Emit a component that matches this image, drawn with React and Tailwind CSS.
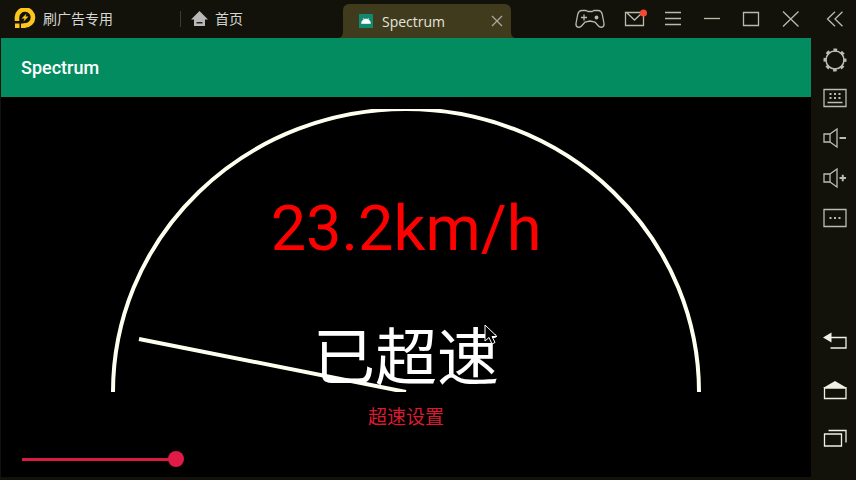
import React, { useState } from "react";

const stroke = { fill: "none", stroke: "currentColor", strokeWidth: 1.3 };

function Icon({ w = 24, h = 24, label, children, className = "" }) {
  return (
    <button type="button" aria-label={label} className={`flex shrink-0 items-center justify-center ${className}`}>
      <svg width={w} height={h} viewBox={`0 0 ${w} ${h}`} {...stroke}>{children}</svg>
    </button>
  );
}

function TitleBar() {
  return (
    <header className="flex h-[38px] shrink-0 items-center text-[#b9b9ac]">
      <div className="flex w-[180px] items-center gap-[7px] pl-[14px] text-[14px] text-[#d6d6d0]">
        <svg width="22" height="22" viewBox="0 0 22 22">
          <path d="M3 13V9a8 8 0 1 1 8 8.500H9.500" fill="none" stroke="#fdc51d" strokeWidth="4.600" />
          <path d="M1 15.500h4.500V20H1zM7 15.500h4.500V20H7z" fill="#fdc51d" />
          <path d="M12.500 5.500L7.500 10.500h3L9.500 13.500l5-5h-3z" fill="#fdc51d" />
        </svg>
        <span>刷广告专用</span>
      </div>
      <div className="flex h-6 flex-1 items-center">
        <span className="h-4 w-px bg-[#3c3c30]" />
        <a href="#home" className="flex items-center gap-[7px] pl-[10px] text-[14px] text-[#d6d6d0]">
          <svg width="17" height="16" viewBox="0 0 17 16" fill="#b9b9b9">
            <path d="M8.500 0L17 8.500h-3V15H3V8.500H0z" />
            <path d="M5.500 11h6v1.500h-6z" fill="#22221c" />
          </svg>
          首页
        </a>
      </div>
      <div className="relative mr-[63px] flex h-[34px] w-[168px] shrink-0 items-center self-end rounded-t-md bg-[#403b1c] pl-4 pr-[8px] text-[#e4e4de]">
        <svg className="absolute bottom-0 -left-1" width="4" height="6" viewBox="0 0 4 6"><path d="M4 0v6H0q4-1 4-6" fill="#403b1c" /></svg>
        <svg className="absolute -right-1 bottom-0" width="4" height="6" viewBox="0 0 4 6"><path d="M0 0v6h4q-4-1-4-6" fill="#403b1c" /></svg>
        <svg width="14" height="14" viewBox="0 0 14 14">
          <path d="M0 0h14v14H0z" fill="#10896f" />
          <path d="M2.500 9.500a4.500 4.500 0 0 1 9 0zM4 4l1.500 2M10 4L8.500 6" fill="#fff" stroke="#fff" strokeWidth=".6" />
        </svg>
        <span className="flex-1 pl-[9px] font-['Open_Sans',sans-serif] text-[14px]">Spectrum</span>
        <Icon w={12} h={12} label="Close tab" className="text-[#a8a89c]"><path d="M1 1l10 10M11 1L1 11" /></Icon>
      </div>
      <Icon w={32} h={20} label="Gamepad">
        <path d="M8 1.500h4l2 1h4l2-1h4c3 0 4 2 4.500 5l1.500 8c.5 4-3.500 5-6 2l-3-3.500-5-1-5 1L8 16.500c-2.500 3-6.500 2-6-2l1.500-8c.5-3 1.500-5 4.500-5z" />
        <path d="M7 8.500h6M10 5.500v6" /><circle cx="22.500" cy="8.500" r="1.300" fill="currentColor" />
      </Icon>
      <Icon w={24} h={20} label="Messages" className="ml-[18px]">
        <path d="M1.500 3.500h18v13h-18zM3 4l7.500 7L18 4" /><circle cx="19.500" cy="4" r="3.500" fill="#f4482f" stroke="none" />
      </Icon>
      <Icon w={18} h={16} label="Menu" className="ml-[16px]"><path d="M1 1.500h16M1 7.500h16M1 13.500h16" /></Icon>
      <Icon w={18} h={16} label="Minimize" className="ml-[21px]"><path d="M1 7.500h16" /></Icon>
      <Icon w={18} h={16} label="Maximize" className="ml-[21px]"><path d="M1.500 1.500h15v13h-15z" /></Icon>
      <Icon w={18} h={16} label="Close" className="ml-[22px]"><path d="M1 .5l15.500 15M16.500.5L1 15.500" /></Icon>
      <Icon w={18} h={16} label="Collapse sidebar" className="ml-[26px] mr-[12px]"><path d="M9 .8L1.500 8 9 15.200M16.500.8L9 8l7.500 7.200" /></Icon>
    </header>
  );
}

function SideBar() {
  return (
    <nav className="flex w-[45px] shrink-0 flex-col items-center pt-[10px] pb-[30px] pl-[3px] text-[#bcbcb0]">
      <Icon label="Settings">
        <circle cx="12" cy="12" r="9" strokeWidth="1.500" />
        <circle cx="12" cy="12" r="10" strokeWidth="3" strokeDasharray="3.600 4.254" strokeDashoffset="1.800" />
      </Icon>
      <Icon label="Keyboard" className="mt-[14px]">
        <path d="M1 3.500h22v17H1zM4.500 16.500h15" />
        <path d="M6.500 8h11M6.500 12h11" strokeWidth="2" strokeDasharray="2 2.500" />
      </Icon>
      <Icon label="Volume down" className="mt-4"><path d="M1 8h6v8H1zM7 8l7-5v18l-7-5" /><path d="M16.500 12h6.500" strokeWidth="2" /></Icon>
      <Icon label="Volume up" className="mt-4"><path d="M1 8h6v8H1zM7 8l7-5v18l-7-5" /><path d="M16.500 12h6.500M19.750 8.800v6.400" strokeWidth="2" /></Icon>
      <Icon label="More" className="mt-4"><path d="M1 3.500h22v17H1z" /><path d="M6.500 12h11" strokeWidth="2" strokeDasharray="2 2.500" /></Icon>
      <div className="flex-1" />
      <Icon label="Back" className="text-[#f0f0e4]"><path d="M8 7.500h15V18H7.500" /><path d="M0 7.500l8.500-5v10z" fill="currentColor" stroke="none" /></Icon>
      <Icon label="Home" className="mt-6 text-[#f0f0e4]"><path d="M1.500 10h21.500v10.500H1.500z" /><path d="M0 10L12 3l12 7z" fill="currentColor" stroke="none" /></Icon>
      <Icon label="Recent apps" className="mt-6 text-[#f0f0e4]"><path d="M1.500 8h17v12h-17zM5.500 4.500h17.500v12" /></Icon>
    </nav>
  );
}

function Gauge() {
  return (
    <section className="relative mt-3 h-[283px] shrink-0 text-center leading-[72px]">
      <svg className="absolute inset-0 h-full w-full" viewBox="0 0 810 283" fill="none" stroke="#fffff0" strokeWidth="4">
        <path d="M112 283A293 283 0 0 1 698 283M138 230L405 283" />
      </svg>
      <p className="relative pt-[84px] text-[63px] text-[#ff0000]">23.2km/h</p>
      <p className="relative pt-[58px] text-[62px] text-white">已超速</p>
    </section>
  );
}

export default function App() {
  const [limit, setLimit] = useState(20);
  const track = {
    backgroundImage: `linear-gradient(to right, transparent 8px, #d81b40 8px, #d81b40 ${limit}%, transparent ${limit}%)`,
  };
  return (
    <div className="relative flex min-h-screen flex-col bg-[#12120a] font-[Roboto,'Noto_Sans_CJK_SC',sans-serif]">
      <TitleBar />
      <div className="flex flex-1">
        <main className="mb-[3px] ml-px flex min-w-0 flex-1 flex-col bg-black">
          <h1 className="flex h-[59px] shrink-0 items-center bg-[#028c60] px-5 text-[18px] font-medium text-white">Spectrum</h1>
          <Gauge />
          <label htmlFor="limit" className="mt-3 text-center text-[19px] leading-7 text-[#d81b30]">超速设置</label>
          <input
            id="limit" type="range" min="0" max="100" value={limit} style={track}
            onChange={(e) => setLimit(Number(e.target.value))}
            className="mx-[13px] mt-[19px] h-4 appearance-none bg-[length:100%_3px] bg-center bg-no-repeat [&::-webkit-slider-thumb]:h-4 [&::-webkit-slider-thumb]:w-4 [&::-webkit-slider-thumb]:appearance-none [&::-webkit-slider-thumb]:rounded-full [&::-webkit-slider-thumb]:bg-[#e01b48]"
          />
        </main>
        <SideBar />
      </div>
      <svg className="pointer-events-none absolute top-[324px] left-[484px]" width="14" height="22" viewBox="0 0 14 22">
        <path d="M1 1v16l4-3.500 3 6.500 3-1.500-3-6h5z" fill="#000" stroke="#fff" />
      </svg>
    </div>
  );
}
